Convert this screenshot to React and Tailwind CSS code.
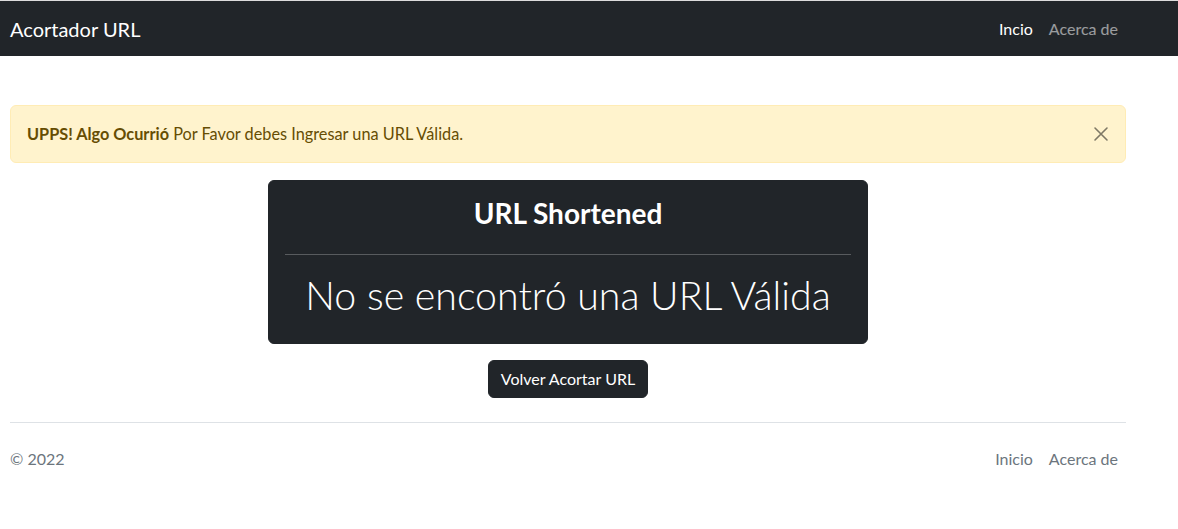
export default function App() {
  return (
    <div className="min-h-[529px] bg-white border-t border-[#dcdcdc] font-['Lato','Open_Sans',sans-serif] text-[16px] text-[#212529]">
      <nav className="bg-[#212529] h-[55px]">
        <div className="w-[1116px] ml-[10px] h-full flex items-center justify-between">
          <span className="text-white text-[20px] leading-[30px]">Acortador URL</span>
          <div className="flex items-center">
            <span className="px-2 text-white leading-6">Incio</span>
            <span className="px-2 text-white/55 leading-6">Acerca de</span>
          </div>
        </div>
      </nav>

      <main className="w-[1116px] ml-[10px] pt-[49px]">
        <div className="relative rounded-md border border-[#ffecb5] bg-[#fff3cd] text-[#664d03] py-4 pl-4 pr-12 leading-6 text-[16.3px]">
          <strong className="font-bold">UPPS! Algo Ocurrió</strong> Por Favor debes Ingresar una URL Válida.
          <button className="absolute right-[16px] top-[20px] w-4 h-4 opacity-50">
            <svg viewBox="0 0 16 16" className="w-4 h-4" fill="none" stroke="#000" strokeWidth="1.6" strokeLinecap="round">
              <path d="M2 2l12 12M14 2L2 14" />
            </svg>
          </button>
        </div>

        <div className="flex flex-col items-center mt-[17px]">
          <div className="w-[600px] rounded-md border border-[#212529] bg-[#212529] text-white p-4 text-center">
            <h3 className="text-[28px] leading-[33px] font-bold mb-6">URL Shortened</h3>
            <hr className="my-4 border-t border-white/25" />
            <p className="text-[39.3px] leading-[48px] font-light mb-2">No se encontró una URL Válida</p>
          </div>
          <button className="mt-4 rounded-md bg-[#212529] text-white px-3 py-[6px] leading-6 border border-[#212529]">
            Volver Acortar URL
          </button>
        </div>

        <footer className="mt-6 border-t border-[#dee2e6] py-4 flex items-center justify-between">
          <span className="text-[#6c757d] leading-10">© 2022</span>
          <div className="flex items-center">
            <span className="px-2 text-[#6c757d] leading-6">Inicio</span>
            <span className="px-2 text-[#6c757d] leading-6">Acerca de</span>
          </div>
        </footer>
      </main>
    </div>
  );
}
